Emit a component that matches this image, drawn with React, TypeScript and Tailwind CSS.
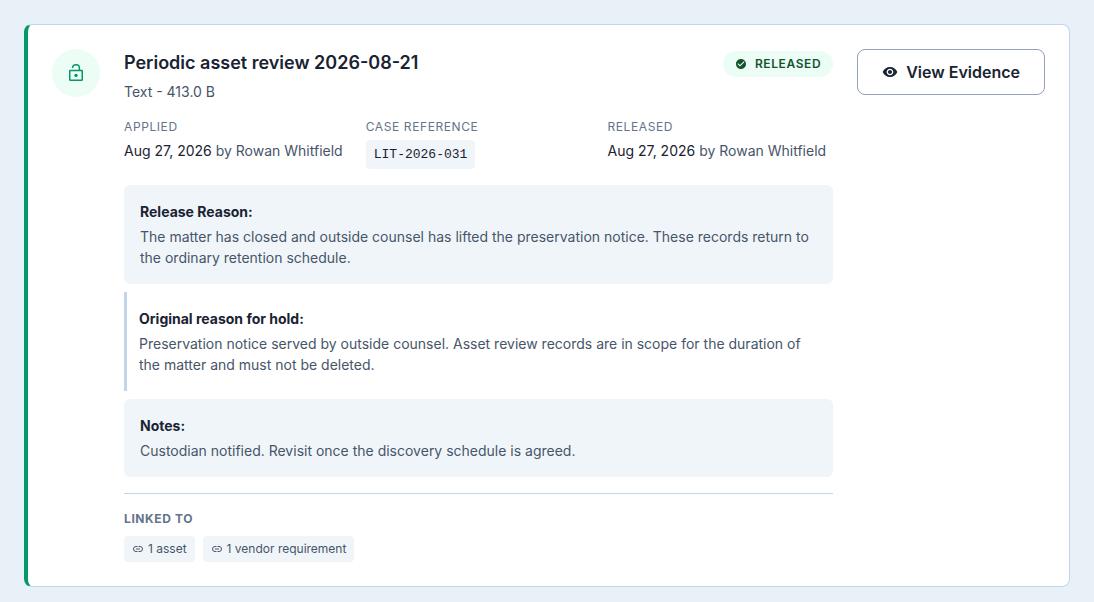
import type { ReactNode } from "react";
import { MdCheckCircle, MdVisibility } from "react-icons/md";

function OpenLock() {
  return (
    <svg viewBox="0 0 20 20" className="size-5" fill="none" stroke="currentColor" strokeWidth="1.5" aria-hidden>
      <rect x="3.75" y="7.5" width="12.5" height="9.75" rx="0.4" />
      <path d="M6.6 5V4.9a3.4 3.15 0 0 1 6.8 0V7.5" />
      <circle cx="10" cy="12.4" r="1.7" fill="currentColor" stroke="none" />
    </svg>
  );
}

function ChainLink() {
  return (
    <svg viewBox="0 0 12 12" className="size-3" fill="none" stroke="currentColor" aria-hidden>
      <path d="M5.5 3.5H4a2.5 2.5 0 0 0 0 5h1.5M6.5 3.5H8a2.5 2.5 0 0 1 0 5H6.5M4 6h4" />
    </svg>
  );
}

function Detail({ label, children }: { label: string; children: ReactNode }) {
  return (
    <div className="flex flex-col items-start gap-1">
      <dt className="text-xs leading-[18px] tracking-[0.05em] text-[#64748b] uppercase">{label}</dt>
      <dd className="text-sm leading-[21px]">{children}</dd>
    </div>
  );
}

function Stamp({ date, person }: { date: string; person: string }) {
  return (
    <>
      {date} <span className="text-[#475569]">by {person}</span>
    </>
  );
}

function Note({ title, quoted = false, children }: { title: string; quoted?: boolean; children: ReactNode }) {
  const frame = quoted ? "border-l-3 border-[#c5d5e8] py-4 pr-4 pl-3" : "rounded-md bg-[#f0f5fa] p-4";
  return (
    <section className={`text-sm leading-[21px] ${frame}`}>
      <h3 className="mb-1 font-bold">{title}</h3>
      <p className="text-[#475569]">{children}</p>
    </section>
  );
}

function LinkChip({ children }: { children: ReactNode }) {
  return (
    <li className="flex items-center gap-1 rounded bg-[#f0f5fa] px-2 py-1 text-xs leading-[18px] text-[#475569]">
      <ChainLink />
      {children}
    </li>
  );
}

export default function App() {
  return (
    <main className="min-h-screen bg-[#e8f0f8] px-6 pt-6 pb-4 font-['Inter',sans-serif] text-[#1a2332]">
      <article className="flex items-start gap-6 rounded-lg border border-l-4 border-[#c5d5e8] border-l-[#059669] bg-white p-6">
        <div className="flex size-12 shrink-0 items-center justify-center rounded-full bg-[#ecfdf5] text-[#059669]">
          <OpenLock />
        </div>

        <div className="min-w-0 flex-1">
          <header className="flex items-start justify-between gap-4">
            <div>
              <h2 className="text-lg leading-7 font-semibold">Periodic asset review 2026-08-21</h2>
              <p className="mt-1 text-sm leading-[21px] text-[#475569]">Text - 413.0 B</p>
            </div>
            <span className="mt-0.5 flex items-center gap-2 rounded-full bg-[#ecfdf5] px-3 py-1 text-xs leading-[18px] font-semibold tracking-[0.05em] text-[#14532d] uppercase">
              <MdCheckCircle className="size-3" aria-hidden />
              Released
            </span>
          </header>

          <dl className="mt-4 grid grid-cols-3 gap-4">
            <Detail label="Applied">
              <Stamp date="Aug 27, 2026" person="Rowan Whitfield" />
            </Detail>
            <Detail label="Case Reference">
              <code className="block rounded bg-[#f0f5fa] px-2 py-1 font-['Liberation_Mono',monospace] text-[13px] leading-[21px]">
                LIT-2026-031
              </code>
            </Detail>
            <Detail label="Released">
              <Stamp date="Aug 27, 2026" person="Rowan Whitfield" />
            </Detail>
          </dl>

          <div className="mt-4 flex flex-col gap-2">
            <Note title="Release Reason:">
              The matter has closed and outside counsel has lifted the preservation notice. These records return to the
              ordinary retention schedule.
            </Note>
            <Note title="Original reason for hold:" quoted>
              Preservation notice served by outside counsel. Asset review records are in scope for the duration of the
              matter and must not be deleted.
            </Note>
            <Note title="Notes:">Custodian notified. Revisit once the discovery schedule is agreed.</Note>
          </div>

          <footer className="mt-4 border-t border-[#c5d5e8] pt-4">
            <h3 className="text-xs leading-[18px] font-bold tracking-[0.05em] text-[#64748b] uppercase">
              Linked to
            </h3>
            <ul className="mt-2 flex flex-wrap gap-2">
              <LinkChip>1 asset</LinkChip>
              <LinkChip>1 vendor requirement</LinkChip>
            </ul>
          </footer>
        </div>

        <button
          type="button"
          className="flex shrink-0 cursor-pointer items-center gap-2 rounded-lg border border-[#94a3b8] bg-white px-6 py-2.5 text-base font-semibold"
        >
          <MdVisibility className="size-4" aria-hidden />
          View Evidence
        </button>
      </article>
    </main>
  );
}
